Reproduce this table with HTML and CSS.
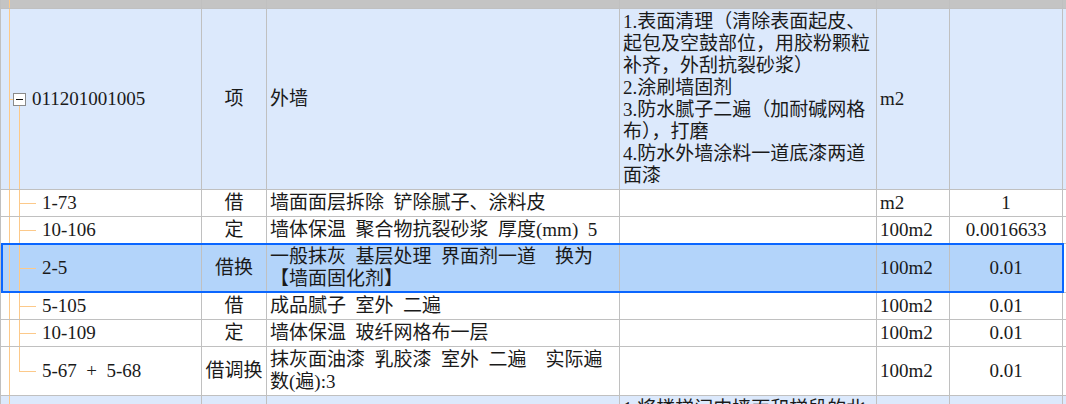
FILE: index.html
```html
<!DOCTYPE html>
<html lang="zh-CN">
<head>
<meta charset="utf-8">
<title>清单</title>
<link rel="stylesheet" href="styles.css">
</head>
<body>
<div class="sheet">
  <div class="row band">
    <div class="c c1"><span class="g1"></span></div>
    <div class="c"></div>
    <div class="c"><span>墙、柱面工程</span></div>
    <div class="c"></div>
    <div class="c"></div>
    <div class="c"></div>
    <div class="c"></div>
  </div>

  <div class="row parent">
    <div class="c c1"><span class="g1"></span><span class="stub"></span><span class="exp"><span class="box"><span class="minus"></span></span></span><span class="code pcode">011201001005</span></div>
    <div class="c ctr">项</div>
    <div class="c">外墙</div>
    <div class="c top"><span>1.表面清理（清除表面起皮、<br>起包及空鼓部位，用胶粉颗粒<br>补齐，外刮抗裂砂浆）<br>2.涂刷墙固剂<br>3.防水腻子二遍（加耐碱网格<br>布），打磨<br>4.防水外墙涂料一道底漆两道<br>面漆</span></div>
    <div class="c">m2</div>
    <div class="c"></div>
    <div class="c"></div>
  </div>

  <div class="row">
    <div class="c c1"><span class="g1"></span><span class="sp"></span><span class="stem"></span><span class="code">1-73</span></div>
    <div class="c ctr">借</div>
    <div class="c">墙面面层拆除 铲除腻子、涂料皮</div>
    <div class="c"></div>
    <div class="c">m2</div>
    <div class="c ctr">1</div>
    <div class="c"></div>
  </div>

  <div class="row">
    <div class="c c1"><span class="g1"></span><span class="sp"></span><span class="stem"></span><span class="code">10-106</span></div>
    <div class="c ctr">定</div>
    <div class="c">墙体保温 聚合物抗裂砂浆 厚度(mm) 5</div>
    <div class="c"></div>
    <div class="c">100m2</div>
    <div class="c ctr">0.0016633</div>
    <div class="c"></div>
  </div>

  <div class="row sel">
    <div class="c c1"><span class="g1"></span><span class="sp"></span><span class="stem"></span><span class="code">2-5</span></div>
    <div class="c ctr">借换</div>
    <div class="c"><span>一般抹灰 基层处理 界面剂一道&nbsp; 换为<br>【墙面固化剂】</span></div>
    <div class="c"></div>
    <div class="c">100m2</div>
    <div class="c ctr">0.01</div>
    <div class="c c7"></div>
  </div>

  <div class="row">
    <div class="c c1"><span class="g1"></span><span class="sp"></span><span class="stem"></span><span class="code">5-105</span></div>
    <div class="c ctr">借</div>
    <div class="c">成品腻子 室外 二遍</div>
    <div class="c"></div>
    <div class="c">100m2</div>
    <div class="c ctr">0.01</div>
    <div class="c"></div>
  </div>

  <div class="row">
    <div class="c c1"><span class="g1"></span><span class="sp"></span><span class="stem"></span><span class="code">10-109</span></div>
    <div class="c ctr">定</div>
    <div class="c">墙体保温 玻纤网格布一层</div>
    <div class="c"></div>
    <div class="c">100m2</div>
    <div class="c ctr">0.01</div>
    <div class="c"></div>
  </div>

  <div class="row">
    <div class="c c1"><span class="g1"></span><span class="sp"></span><span class="stem last"></span><span class="code">5-67 + 5-68</span></div>
    <div class="c ctr">借调换</div>
    <div class="c"><span>抹灰面油漆 乳胶漆 室外 二遍&nbsp; 实际遍<br>数(遍):3</span></div>
    <div class="c"></div>
    <div class="c">100m2</div>
    <div class="c ctr">0.01</div>
    <div class="c"></div>
  </div>

  <div class="row parent">
    <div class="c c1"><span class="g1"></span></div>
    <div class="c"></div>
    <div class="c"></div>
    <div class="c top"><span>1.将楼梯间内墙面和梯段的北</span></div>
    <div class="c"></div>
    <div class="c"></div>
    <div class="c"></div>
  </div>
</div>
</body>
</html>
```

FILE: styles.css
```css
* {
  box-sizing: border-box;
  margin: 0;
  padding: 0;
}

html, body {
  width: 1066px;
  height: 404px;
  overflow: hidden;
  background: #fff;
}

body {
  font-family: "Liberation Serif", "Noto Sans CJK SC", serif;
  font-size: 19px;
  color: #1a1a1a;
  word-spacing: 4.75px;
}

.sheet {
  display: flex;
  flex-direction: column;
  gap: 1px;
  background: #c0c0c0;
}

.row {
  display: grid;
  grid-template-columns: 200px 64px 352px 256px 72px 112px 1fr;
  column-gap: 1px;
  padding-left: 1px;
  background: #c0c0c0;
}

.c {
  display: flex;
  align-items: center;
  padding: 2px 3px;
  line-height: 22px;
  white-space: nowrap;
  overflow: hidden;
  background: #fff;
}

.ctr { justify-content: center; }
.top { align-items: flex-start; }

.parent .c { background: #dce9fc; }
.sel .c { background: #b3d4fa; }
.sel .c.c7 { background: #fff; }

.sel { position: relative; }
.sel::after {
  content: "";
  position: absolute;
  left: 1px;
  right: 2px;
  top: -1px;
  bottom: -1px;
  border: 2px solid #0a66ff;
  z-index: 1;
  pointer-events: none;
}

/* band (bottom edge of previous row) */
.band .c {
  height: 8px;
  padding: 0 3px 5px;
  align-items: flex-end;
  background: #c4c4c4;
}
.band .c.c1 { padding: 0; align-items: stretch; }

/* tree column */
.c1 {
  padding: 0;
  align-items: stretch;
}
.g1 {
  flex: none;
  width: 9px;
  border-right: 1px solid #fcc98a;
}
.sp {
  flex: none;
  width: 9px;
}
.stem {
  flex: none;
  width: 17px;
  background-image: linear-gradient(#fcc98a, #fcc98a), linear-gradient(#fcc98a, #fcc98a);
  background-repeat: no-repeat;
  background-size: 1px 100%, 100% 1px;
  background-position: 0 0, 0 50%;
}
.stem.last {
  background-size: 1px 50%, 100% 1px;
}
.stub {
  flex: none;
  width: 3px;
  background: linear-gradient(#fcc98a, #fcc98a) no-repeat 0 50% / 100% 1px;
}
.exp {
  flex: none;
  width: 13px;
  display: flex;
  flex-direction: column;
  justify-content: center;
  background: linear-gradient(#fcc98a, #fcc98a) no-repeat 6px 100% / 1px 50%;
}
.box {
  width: 13px;
  height: 13px;
  border: 1px solid #8a8a8a;
  background: #fff;
  display: flex;
  align-items: center;
  justify-content: center;
}
.minus {
  width: 7px;
  height: 1px;
  background: #111;
}
.code {
  align-self: center;
  margin-left: 6px;
  padding: 2px 0;
}
```
